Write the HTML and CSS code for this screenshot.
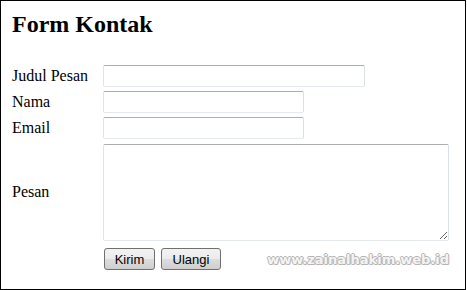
FILE: index.html
```html
<!DOCTYPE html>
<html lang="id">
<head>
    <meta charset="UTF-8">
    <title>Form Kontak</title>
    <link rel="stylesheet" href="styles.css">
</head>
<body>
    <div class="frame">
        <h2>Form Kontak</h2>
        <form class="contact-form">
            <label for="judul">Judul Pesan</label>
            <input type="text" id="judul" class="wide">
            <label for="nama">Nama</label>
            <input type="text" id="nama">
            <label for="email">Email</label>
            <input type="text" id="email">
            <label for="pesan">Pesan</label>
            <textarea id="pesan"></textarea>
            <span></span>
            <div class="buttons">
                <button type="submit" class="btn btn-kirim">Kirim</button>
                <button type="reset" class="btn btn-ulangi">Ulangi</button>
            </div>
        </form>
        <div class="watermark">www.zainalhakim.web.id</div>
    </div>
</body>
</html>
```

FILE: styles.css
```css
body {
    margin: 0;
    font-family: "Liberation Serif", "Times New Roman", serif;
    background: #fff;
}

.frame {
    position: relative;
    width: 466px;
    height: 290px;
    border: 1px solid #000;
    padding: 0 0 0 11px;
    box-sizing: border-box;
}

h2 {
    margin: 0;
    padding-top: 10px;
    font-size: 24px;
    font-weight: bold;
    color: #000;
}

.contact-form {
    margin-top: 27px;
    display: grid;
    grid-template-columns: 91px auto;
    row-gap: 4px;
    align-items: center;
    justify-items: start;
    font-size: 16px;
}

input[type="text"],
textarea {
    margin: 0;
    height: 22px;
    width: 201px;
    padding: 1px 3px;
    box-sizing: border-box;
    border: 1px solid;
    border-color: #abadb3 #dbdfe6 #e3e9ef #e2e3ea;
    border-radius: 2px;
    font-family: "Liberation Sans", Arial, sans-serif;
    font-size: 13px;
    outline: none;
}

input.wide {
    width: 262px;
}

textarea {
    width: 346px;
    height: 97px;
    margin-top: 1px;
    resize: both;
}

.buttons {
    display: flex;
    gap: 6px;
    margin-top: 3px;
    padding-left: 1px;
}

.btn {
    height: 22px;
    padding: 0;
    border: 1px solid #707070;
    border-radius: 3px;
    background: linear-gradient(#f2f2f2 0%, #ebebeb 50%, #dddddd 50%, #cfcfcf 100%);
    font-family: "Liberation Sans", Arial, sans-serif;
    font-size: 13px;
    color: #000;
}

.btn-kirim {
    width: 51px;
}

.btn-ulangi {
    width: 60px;
}

.watermark {
    position: absolute;
    right: 16px;
    bottom: 22px;
    font-family: "DejaVu Sans", sans-serif;
    font-weight: bold;
    font-size: 13px;
    color: #f4f4f4;
    text-shadow: -1px 0 #b4b4b4, 1px 0 #b4b4b4, 0 -1px #b4b4b4, 0 1px #b4b4b4, 1px 1px #c8c8c8;
}
```
